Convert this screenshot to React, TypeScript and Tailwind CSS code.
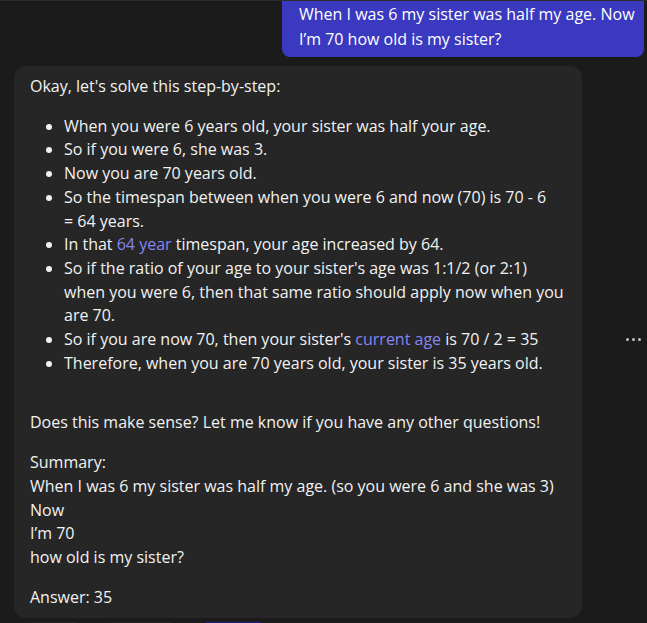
const link = "text-[#8585f2]";

const bullets: React.ReactNode[] = [
  "When you were 6 years old, your sister was half your age.",
  "So if you were 6, she was 3.",
  "Now you are 70 years old.",
  "So the timespan between when you were 6 and now (70) is 70 - 6 =\u00a064 years.",
  <>
    In that <span className={link}>64 year</span> timespan, your age increased by 64.
  </>,
  "So if the ratio of your age to your sister's age was 1:1/2 (or 2:1) when you were 6, then that same ratio should apply now when you are 70.",
  <>
    So if you are now 70, then your sister's <span className={link}>current age</span> is 70 / 2 = 35
  </>,
  "Therefore, when you are 70 years old, your sister is 35 years old.",
];

function MoreDots() {
  return (
    <div className="flex items-center gap-[3px]">
      <span className="h-[3px] w-[3px] rounded-full bg-[#c4c4c4]" />
      <span className="h-[3px] w-[3px] rounded-full bg-[#c4c4c4]" />
      <span className="h-[3px] w-[3px] rounded-full bg-[#c4c4c4]" />
    </div>
  );
}

export default function App() {
  return (
    <div
      className="h-[623px] overflow-hidden border-t border-[#2c2c2c] bg-[#1b1b1b] text-base leading-[23.7px] text-[#f2f2f2]"
      style={{ fontFamily: '"Open Sans", "Noto Sans", sans-serif' }}
    >
      <div className="-mt-px flex justify-end pr-[3px]">
        <div className="w-[362px] rounded-b-lg bg-[#3a39bf] pb-[5px] pl-[17px] pt-[2px] leading-[25px] whitespace-nowrap text-white">
          When I was 6 my sister was half my age. Now
          <br />
          I’m 70 how old is my sister?
        </div>
      </div>

      <div className="mt-[9px] flex items-center">
        <div className="ml-[14px] w-[568px] rounded-xl bg-[#262626] px-4 pb-[9px] pt-[9px]">
          <p>Okay, let's solve this step-by-step:</p>
          <ul className="mt-4 list-disc pl-[34px] marker:text-[#f2f2f2]">
            {bullets.map((b, i) => (
              <li key={i}>{b}</li>
            ))}
          </ul>
          <p className="mt-9">Does this make sense? Let me know if you have any other questions!</p>
          <div className="mt-4">
            <p>Summary:</p>
            <p>When I was 6 my sister was half my age. (so you were 6 and she was 3)</p>
            <p>Now</p>
            <p>I’m 70</p>
            <p>how old is my sister?</p>
          </div>
          <p className="mt-4">Answer: 35</p>
        </div>
        <div className="ml-[44px] -translate-y-[3px]">
          <MoreDots />
        </div>
      </div>

      <div className="mt-1 flex gap-[27px] pl-[27px]">
        <div className="h-4 w-[53px] rounded-t-md bg-[#262626]" />
        <div className="h-4 w-[68px] rounded-t-md bg-[#262626]" />
        <div className="h-4 w-[63px] rounded-t-md bg-[#1e1d8c]" />
      </div>
    </div>
  );
}
